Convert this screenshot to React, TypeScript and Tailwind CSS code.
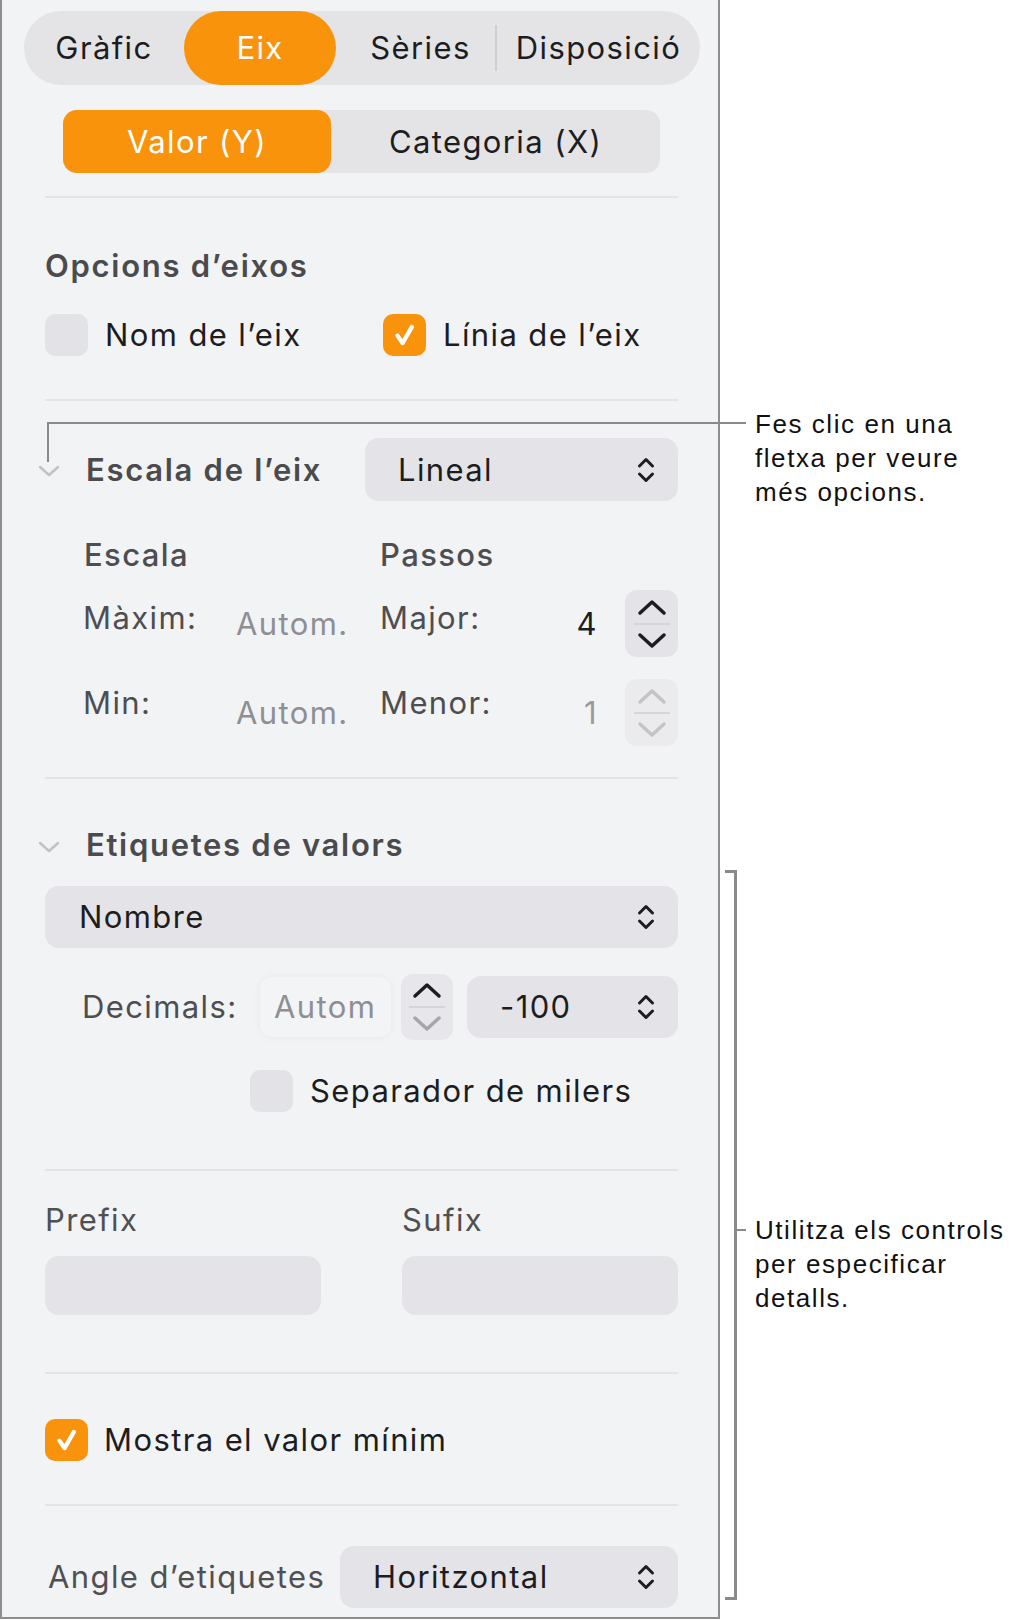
import type { ReactNode } from 'react';

const ORANGE = 'bg-[#f8930b]';

function Divider({ className = '' }: { className?: string }) {
  return <div className={`h-[2px] shrink-0 bg-[#e3e4e7] ${className}`} />;
}

function UpDownIcon() {
  return (
    <svg width="20" height="28" viewBox="0 0 20 28" fill="none" stroke="#1d1d1f" strokeWidth="3" strokeLinecap="round" strokeLinejoin="round">
      <path d="M3.5 10 L10 3.5 L16.5 10" />
      <path d="M3.5 18 L10 24.5 L16.5 18" />
    </svg>
  );
}

function Disclosure() {
  return (
    <svg width="22" height="12" viewBox="0 0 22 12" fill="none" stroke="#c2c2c6" strokeWidth="2.5" strokeLinecap="round" strokeLinejoin="round">
      <path d="M2 2 L11 10 L20 2" />
    </svg>
  );
}

function Check() {
  return (
    <svg width="30" height="30" viewBox="0 0 24 24" fill="none" stroke="#fff" strokeWidth="3.4" strokeLinecap="round" strokeLinejoin="round">
      <path d="M6 12.5 L10 18.5 L17.5 5.5" />
    </svg>
  );
}

function Checkbox({ checked }: { checked?: boolean }) {
  return (
    <div
      className={`flex h-[42px] w-[43px] shrink-0 items-center justify-center rounded-[10px] ${
        checked ? ORANGE : 'bg-[#e3e3e7]'
      }`}
    >
      {checked && <Check />}
    </div>
  );
}

function Select({ label, className = '' }: { label: string; className?: string }) {
  return (
    <div className={`flex items-center justify-between rounded-[14px] bg-[#e4e4e8] pr-[22px] text-[#1d1d1f] ${className}`}>
      <span>{label}</span>
      <UpDownIcon />
    </div>
  );
}

// up/down stepper; colours of each arrow say whether it can still step
function Stepper({ up, down, bg, className = '' }: { up: string; down: string; bg: string; className?: string }) {
  return (
    <div className={`flex shrink-0 flex-col items-center justify-center rounded-[12px] ${bg} ${className}`}>
      <svg width="30" height="17" viewBox="0 0 30 17" fill="none" stroke={up} strokeWidth="3.5" strokeLinecap="round" strokeLinejoin="round">
        <path d="M3 14 L15 3 L27 14" />
      </svg>
      <div className="my-[7px] h-[2px] w-[36px] bg-[#d5d5d9]" />
      <svg width="30" height="17" viewBox="0 0 30 17" fill="none" stroke={down} strokeWidth="3.5" strokeLinecap="round" strokeLinejoin="round">
        <path d="M3 3 L15 14 L27 3" />
      </svg>
    </div>
  );
}

function SectionTitle({ children }: { children: ReactNode }) {
  return <span className="font-semibold tracking-[0.055em] text-[#4b4b4e]">{children}</span>;
}

export default function App() {
  return (
    <div className="relative flex h-[1620px] w-[1016px] overflow-hidden bg-white font-['Inter','Noto_Sans',sans-serif]">
      {/* inspector panel */}
      <aside className="flex h-[1619px] w-[720px] shrink-0 flex-col border-x-2 border-b-2 border-[#8e8e8e] bg-[#f2f3f5] pl-[43px] pr-[40px] text-[31px] leading-[36px] tracking-[0.045em] text-[#1d1d1f]">
        {/* top tabs */}
        <div className="ml-[-21px] mt-[11px] flex h-[74px] w-[676px] shrink-0 items-center rounded-full bg-[#e4e4e7]">
          <div className="w-[160px] text-center">Gràfic</div>
          <div className={`flex h-full w-[152px] items-center justify-center rounded-full ${ORANGE} text-white`}>Eix</div>
          <div className="w-[159px] pl-[10px] text-center">Sèries</div>
          <div className="h-[46px] w-[2px] bg-[#cfcfd3]" />
          <div className="flex-1 text-center">Disposició</div>
        </div>

        {/* axis switch */}
        <div className="ml-[18px] mt-[25px] flex h-[63px] w-[597px] shrink-0 rounded-[14px] bg-[#e4e4e7]">
          <div className={`flex w-[268px] items-center justify-center rounded-[14px] ${ORANGE} text-white`}>Valor (Y)</div>
          <div className="flex flex-1 items-center justify-center">Categoria (X)</div>
        </div>

        <Divider className="mt-[23px]" />

        <div className="mt-[50px] h-[36px]">
          <SectionTitle>Opcions d’eixos</SectionTitle>
        </div>
        <div className="mt-[29px] flex h-[44px] items-center">
          <div className="flex w-[338px] items-center gap-[17px]">
            <Checkbox />
            <span>Nom de l’eix</span>
          </div>
          <div className="flex items-center gap-[17px]">
            <Checkbox checked />
            <span>Línia de l’eix</span>
          </div>
        </div>

        <Divider className="mt-[42px]" />

        {/* axis scale */}
        <div className="mt-[37px] flex h-[63px] items-center">
          <div className="ml-[-7px] mt-[3px] flex w-[22px]">
            <Disclosure />
          </div>
          <div className="ml-[26px]">
            <SectionTitle>Escala de l’eix</SectionTitle>
          </div>
          <Select label="Lineal" className="ml-auto h-full w-[313px] pl-[33px]" />
        </div>

        <div className="mt-[36px] flex h-[36px] font-medium text-[#4e4e51]">
          <span className="ml-[39px] w-[296px]">Escala</span>
          <span>Passos</span>
        </div>

        <div className="mt-[17px] flex h-[67px] items-center text-[#4e4e51]">
          <span className="ml-[38px] mt-[10px] w-[153px] self-start">Màxim:</span>
          <span className="w-[144px] text-[#8e8e93]">Autom.</span>
          <span className="mt-[10px] w-[116px] self-start">Major:</span>
          <span className="w-[114px] pr-[12px] text-right text-[#1d1d1f]">4</span>
          <Stepper up="#1d1d1f" down="#1d1d1f" bg="bg-[#e4e4e8]" className="ml-[15px] h-full w-[53px]" />
        </div>

        <div className="mt-[22px] flex h-[67px] items-center text-[#4e4e51]">
          <span className="ml-[38px] mt-[6px] w-[153px] self-start">Min:</span>
          <span className="w-[144px] text-[#8e8e93]">Autom.</span>
          <span className="mt-[6px] w-[116px] self-start">Menor:</span>
          <span className="w-[114px] pr-[12px] text-right text-[#9a9a9e]">1</span>
          <Stepper up="#c4c4c8" down="#c4c4c8" bg="bg-[#ebebee]" className="ml-[15px] h-full w-[53px]" />
        </div>

        <Divider className="mt-[31px]" />

        {/* value labels */}
        <div className="mt-[48px] flex h-[36px] items-center">
          <div className="ml-[-7px] mt-[3px] flex w-[22px]">
            <Disclosure />
          </div>
          <div className="ml-[26px]">
            <SectionTitle>Etiquetes de valors</SectionTitle>
          </div>
        </div>

        <Select label="Nombre" className="mt-[23px] h-[62px] shrink-0 pl-[34px]" />

        <div className="mt-[26px] flex h-[66px] items-center">
          <span className="ml-[37px] w-[178px] text-[#4e4e51]">Decimals:</span>
          <div className="flex h-[60px] w-[131px] items-center rounded-[12px] bg-[#f3f4f6] pl-[14px] text-[#8e8e93] shadow-[0_0_8px_rgba(0,0,0,0.05)]">
            Autom
          </div>
          <Stepper up="#1d1d1f" down="#a6a6aa" bg="bg-[#e7e7eb]" className="ml-[10px] h-full w-[52px]" />
          <Select label="-100" className="ml-[14px] h-[62px] flex-1 pl-[33px]" />
        </div>

        <div className="mt-[30px] flex h-[42px] items-center gap-[17px]">
          <div className="ml-[205px]">
            <Checkbox />
          </div>
          <span>Separador de milers</span>
        </div>

        <Divider className="mt-[57px]" />

        <div className="mt-[31px] grid h-[36px] grid-cols-2 gap-[81px] text-[#505053]">
          <span>Prefix</span>
          <span>Sufix</span>
        </div>
        <div className="mt-[18px] grid h-[59px] grid-cols-2 gap-[81px]">
          <div className="rounded-[14px] bg-[#e4e4e8]" />
          <div className="rounded-[14px] bg-[#e4e4e8]" />
        </div>

        <Divider className="mt-[57px]" />

        <div className="mt-[45px] flex h-[42px] items-center gap-[16px]">
          <Checkbox checked />
          <span>Mostra el valor mínim</span>
        </div>

        <Divider className="mt-[43px]" />

        <div className="mt-[40px] flex h-[62px] items-center">
          <span className="ml-[3px] text-[#505053]">Angle d’etiquetes</span>
          <Select label="Horitzontal" className="ml-auto h-full w-[338px] pl-[33px]" />
        </div>
      </aside>

      {/* callout texts */}
      <div className="flex flex-1 flex-col pl-[35px] font-['Liberation_Sans',Arial,sans-serif] text-[26px] leading-[34px] tracking-[0.06em] text-[#111]">
        <p className="mt-[407px]">
          Fes clic en una
          <br />
          fletxa per veure
          <br />
          més opcions.
        </p>
        <p className="mt-[704px]">
          Utilitza els controls
          <br />
          per especificar
          <br />
          detalls.
        </p>
      </div>

      {/* leader lines */}
      <div className="absolute left-[47px] top-[422px] h-[2px] w-[699px] bg-[#8a8a8a]" />
      <div className="absolute left-[47px] top-[422px] h-[40px] w-[2px] bg-[#8a8a8a]" />
      <div className="absolute left-[734px] top-[870px] h-[730px] w-[3px] bg-[#8a8a8a]" />
      <div className="absolute left-[725px] top-[870px] h-[3px] w-[12px] bg-[#8a8a8a]" />
      <div className="absolute left-[725px] top-[1597px] h-[3px] w-[12px] bg-[#8a8a8a]" />
      <div className="absolute left-[737px] top-[1229px] h-[2px] w-[9px] bg-[#8a8a8a]" />
    </div>
  );
}
